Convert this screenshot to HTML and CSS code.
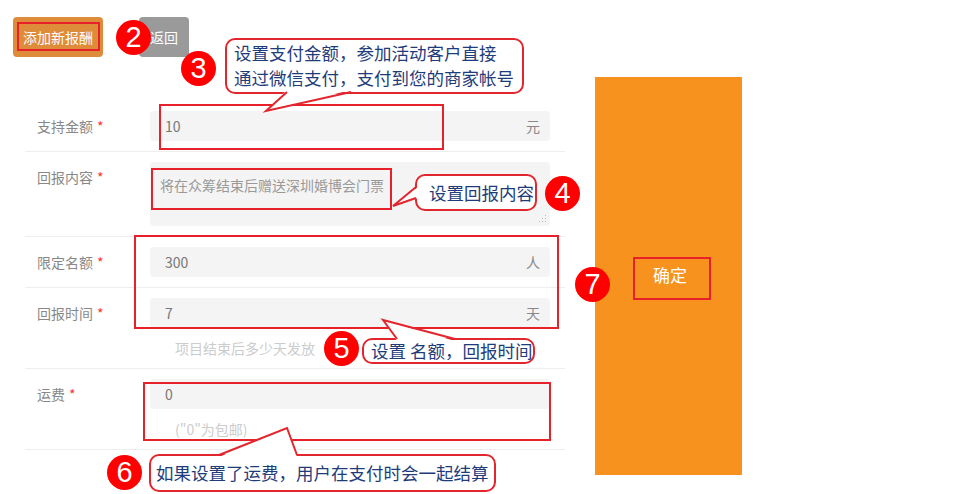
FILE: index.html
```html
<!DOCTYPE html>
<html lang="zh-CN">
<head>
    <meta charset="UTF-8">
    <meta name="viewport" content="width=device-width, initial-scale=1.0">
    <title>添加新报酬</title>
    <link rel="stylesheet" href="styles.css">
</head>
<body>
<div class="page">
    <div class="toolbar">
        <a class="btn btn-add" href="#">添加新报酬</a>
        <a class="btn btn-back" href="#">返回</a>
    </div>

    <div class="main">
        <div class="form">
            <div class="row">
                <div class="label">支持金额<span class="req">*</span></div>
                <div class="field">
                    <div class="input"><span class="value">10</span><span class="unit">元</span></div>
                </div>
            </div>
            <div class="row">
                <div class="label">回报内容<span class="req">*</span></div>
                <div class="field">
                    <div class="textarea">
                        <span class="placeholder">将在众筹结束后赠送深圳婚博会门票</span>
                        <svg class="grip" width="8" height="8" viewBox="0 0 8 8">
                            <rect x="6" y="0" width="1" height="1" fill="#bbb"/>
                            <rect x="3" y="3" width="1" height="1" fill="#bbb"/>
                            <rect x="6" y="3" width="1" height="1" fill="#bbb"/>
                            <rect x="0" y="6" width="1" height="1" fill="#bbb"/>
                            <rect x="3" y="6" width="1" height="1" fill="#bbb"/>
                            <rect x="6" y="6" width="1" height="1" fill="#bbb"/>
                        </svg>
                    </div>
                </div>
            </div>
            <div class="row">
                <div class="label">限定名额<span class="req">*</span></div>
                <div class="field">
                    <div class="input"><span class="value">300</span><span class="unit">人</span></div>
                </div>
            </div>
            <div class="row">
                <div class="label">回报时间<span class="req">*</span></div>
                <div class="field">
                    <div class="input"><span class="value">7</span><span class="unit">天</span></div>
                    <p class="hint">项目结束后多少天发放</p>
                </div>
            </div>
            <div class="row">
                <div class="label">运费<span class="req">*</span></div>
                <div class="field">
                    <div class="input"><span class="value">0</span></div>
                    <p class="hint">("0"为包邮)</p>
                </div>
            </div>
        </div>

        <div class="submit">
            <span class="submit-text">确定</span>
        </div>
    </div>

    <!-- 标注层 -->
    <div class="mark mark-add"></div>
    <div class="mark mark-amount"></div>
    <div class="mark mark-content"></div>
    <div class="mark mark-quota"></div>
    <div class="mark mark-freight"></div>
    <div class="mark mark-submit"></div>

    <div class="tip tip-pay">设置支付金额，参加活动客户直接<br>通过微信支付，支付到您的商家帐号</div>
    <div class="tip tip-content">设置回报内容</div>
    <div class="tip tip-quota">设置 名额，回报时间</div>
    <div class="tip tip-freight">如果设置了运费，用户在支付时会一起结算</div>

    <svg class="tails" width="964" height="494" viewBox="0 0 964 494">
        <g fill="#fff">
            <polygon points="287,90 266,111 351,90"/>
            <polygon points="418,187 393,206 418,198"/>
            <polygon points="397,341 383,320 455,341"/>
            <polygon points="219,457 287,428 297,457"/>
        </g>
        <g fill="none" stroke="#e3262e" stroke-width="2" stroke-linejoin="miter">
            <polyline points="287,92 266,111 351,92"/>
            <polyline points="416,187 393,206 416,198"/>
            <polyline points="397,339 383,320 455,339"/>
            <polyline points="219,455 287,428 297,455"/>
        </g>
    </svg>

    <span class="num num-2">2</span>
    <span class="num num-3">3</span>
    <span class="num num-4">4</span>
    <span class="num num-5">5</span>
    <span class="num num-6">6</span>
    <span class="num num-7">7</span>
</div>
</body>
</html>
```

FILE: styles.css
```css
a {
    text-decoration: none;
}

body {
    margin: 0;
    padding: 0;
    background-color: #fff;
    font-family: "Noto Sans CJK SC", "Noto Sans", sans-serif;
    font-size: 14px;
}

.page {
    position: relative;
    width: 964px;
    height: 494px;
    overflow: hidden;
}

/* 顶部按钮 */
.toolbar {
    display: flex;
    gap: 36px;
    padding: 17px 0 0 13px;
}
.btn {
    display: flex;
    align-items: center;
    justify-content: center;
    height: 40px;
    border-radius: 4px;
    color: #fff;
    font-size: 14px;
}
.btn-add {
    width: 90px;
    background-color: #de8b3a;
}
.btn-back {
    width: 50px;
    background-color: #9a9a9a;
}

.main {
    display: flex;
    align-items: flex-start;
    margin-top: 20px;
}

/* 表单 */
.form {
    width: 540px;
    margin: 24px 0 0 25px;
}
.row {
    display: flex;
    padding: 10px 0;
    border-bottom: 1px solid #eee;
}
.label {
    width: 113px;
    padding-left: 12px;
    line-height: 30px;
    color: #888;
}
.req {
    color: #f33;
    margin-left: 4px;
}
.field {
    width: 400px;
}
.input {
    display: flex;
    justify-content: space-between;
    align-items: center;
    height: 30px;
    padding: 0 10px 0 15px;
    background-color: #f4f4f4;
    border-radius: 4px;
    color: #777;
}
.unit {
    color: #888;
}
.textarea {
    position: relative;
    height: 51px;
    padding: 13px 10px 0 10px;
    background-color: #f4f4f4;
    border-radius: 4px;
    line-height: 20px;
}
.placeholder {
    color: #999;
}
.grip {
    position: absolute;
    right: 3px;
    bottom: 3px;
}
.hint {
    margin: 10px 0 0 0;
    padding-left: 25px;
    line-height: 20px;
    color: #ccc;
}

/* 确定 */
.submit {
    display: flex;
    align-items: center;
    justify-content: center;
    width: 147px;
    height: 398px;
    margin-left: 30px;
    background-color: #f7921e;
}
.submit-text {
    color: #fff;
    font-size: 17px;
    margin: 0 0 3px 3px;
}

/* 红框标注 */
.mark {
    position: absolute;
    border: 2px solid #e8202a;
    box-sizing: border-box;
}
.mark-add { left: 17px; top: 22px; width: 83px; height: 29px; }
.mark-amount { left: 159px; top: 104px; width: 285px; height: 46px; }
.mark-content { left: 151px; top: 168px; width: 241px; height: 42px; }
.mark-quota { left: 134px; top: 235px; width: 425px; height: 94px; }
.mark-freight { left: 143px; top: 382px; width: 408px; height: 59px; }
.mark-submit { left: 633px; top: 257px; width: 78px; height: 43px; }

/* 说明气泡 */
.tip {
    position: absolute;
    box-sizing: border-box;
    border: 2px solid #e3262e;
    border-radius: 10px;
    background-color: #fff;
    color: #1f3c7a;
    font-size: 17.5px;
    white-space: nowrap;
}
.tip-pay {
    left: 225px;
    top: 38px;
    width: 299px;
    height: 56px;
    padding: 0 0 0 7px;
    line-height: 25px;
}
.tip-content {
    left: 415px;
    top: 174px;
    width: 122px;
    height: 37px;
    padding-left: 12px;
    line-height: 33px;
}
.tip-quota {
    left: 362px;
    top: 338px;
    width: 173px;
    height: 26px;
    padding-left: 7px;
    line-height: 22px;
}
.tip-freight {
    left: 149px;
    top: 454px;
    width: 347px;
    height: 38px;
    padding-left: 5px;
    line-height: 33px;
}

.tails {
    position: absolute;
    left: 0;
    top: 0;
}

/* 序号圆点 */
.num {
    position: absolute;
    width: 35px;
    height: 35px;
    border-radius: 50%;
    background-color: #f00;
    color: #fff;
    font-family: "Liberation Sans", Arial, sans-serif;
    font-size: 29px;
    line-height: 35px;
    text-align: center;
}
.num-2 { left: 116px; top: 20px; }
.num-3 { left: 181px; top: 51px; }
.num-4 { left: 545px; top: 176px; }
.num-5 { left: 324px; top: 331px; }
.num-6 { left: 107px; top: 455px; }
.num-7 { left: 575px; top: 267px; }
```
